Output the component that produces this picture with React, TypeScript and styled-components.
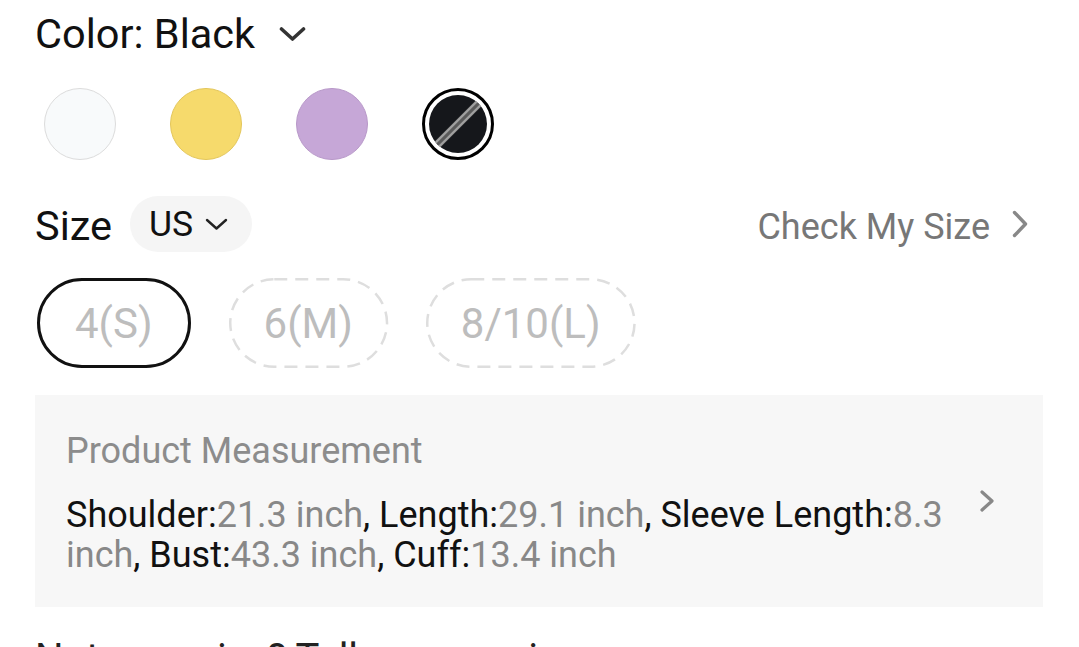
import { FC, Fragment } from "react";
import styled, { createGlobalStyle } from "styled-components";

// ----------------------------------------------------------------------------

const GlobalStyle = createGlobalStyle`
  html, body {
    margin: 0;
    padding: 0;
    background: #ffffff;
    font-family: Roboto, "Noto Sans", "Liberation Sans", sans-serif;
    color: #111111;
    overflow: hidden;
  }
`;

// ----------------------------------------------------------------------------

const Page = styled.div`
  width: 1079px;
  height: 647px;
  box-sizing: border-box;
  padding: 0 36px 0 35px;
  display: flex;
  flex-direction: column;
  overflow: hidden;
`;

const TitleRow = styled.div`
  margin-top: 10px;
  display: flex;
  align-items: center;
  gap: 24px;
  height: 48px;
`;

const Title = styled.span`
  font-size: 41.5px;
  line-height: 48px;
  color: #111;
`;

const SwatchRow = styled.div`
  margin-top: 30px;
  display: flex;
  gap: 54px;
  padding-left: 9px;
`;

const SwatchCircle = styled.div<{ $fill: string; $ring: string }>`
  width: 72px;
  height: 72px;
  box-sizing: border-box;
  border-radius: 50%;
  background: ${({ $fill }) => $fill};
  border: 1.5px solid ${({ $ring }) => $ring};
`;

const SelectedSwatch = styled.div`
  width: 72px;
  height: 72px;
  box-sizing: border-box;
  border-radius: 50%;
  border: 3.5px solid #000;
  padding: 4px;
  background: #fff;
  display: flex;
`;

const SelectedInner = styled.div`
  flex: 1;
  border-radius: 50%;
  background: #15171b;
  overflow: hidden;
  display: flex;

  svg {
    width: 100%;
    height: 100%;
  }
`;

const SizeRow = styled.div`
  margin-top: 36px;
  height: 56px;
  display: flex;
  align-items: center;
`;

const SizeLabel = styled.span`
  font-size: 41.5px;
  line-height: 56px;
  padding-top: 3px;
  color: #111;
`;

const UnitPill = styled.div`
  margin-left: 18px;
  height: 56px;
  box-sizing: border-box;
  padding: 0 24px 0 19px;
  border-radius: 28px;
  background: #f5f5f5;
  display: flex;
  align-items: center;
  gap: 12px;
  font-size: 35.5px;
  color: #111;
`;

const CheckLink = styled.div`
  margin-left: auto;
  margin-right: 15px;
  padding-top: 6px;
  display: flex;
  align-items: center;
  gap: 22px;
  font-size: 36px;
  color: #777;

  svg {
    margin-top: -6px;
  }
`;

const ChipRow = styled.div`
  margin-top: 26px;
  margin-left: 2px;
  display: flex;
  gap: 38px;
`;

const Chip = styled.div<{ $selected?: boolean }>`
  position: relative;
  height: 90px;
  box-sizing: border-box;
  padding: 0 35px;
  border-radius: 45px;
  border: ${({ $selected }) => ($selected ? "3px solid #111" : "none")};
  display: flex;
  align-items: center;
  font-size: 42px;
  color: #bdbdbd;

  svg {
    position: absolute;
    inset: 0;
    width: 100%;
    height: 100%;
    overflow: visible;
  }

  rect {
    x: 1.25px;
    y: 1.25px;
    width: calc(100% - 2.5px);
    height: calc(100% - 2.5px);
  }
`;

const MeasureBox = styled.div`
  margin-top: 27px;
  background: #f7f7f7;
  padding: 36px 46px 32px 31px;
  display: flex;
  align-items: flex-start;
  gap: 18px;
`;

const MeasureBody = styled.div`
  flex: 1;
  display: flex;
  flex-direction: column;
  gap: 24px;
`;

const MeasureTitle = styled.div`
  font-size: 36px;
  line-height: 40px;
  color: #8c8c8c;
`;

const MeasureText = styled.div`
  font-size: 36px;
  line-height: 40px;
  color: #111;
`;

const MeasureValue = styled.span`
  color: #888;
`;

const MeasureArrow = styled.div`
  margin-top: 58px;
  display: flex;
`;

const FootText = styled.div`
  margin-top: 28px;
  font-size: 40px;
  line-height: 48px;
  color: #222;
  white-space: nowrap;
`;

// ----------------------------------------------------------------------------

const swatches = [
  { name: "White", fill: "#f8fafb", ring: "#dcdcdc" },
  { name: "Yellow", fill: "#f6da6c", ring: "#e3c65a" },
  { name: "Purple", fill: "#c6a7d7", ring: "#b898c9" },
];

const sizes = [
  { label: "4(S)", selected: true },
  { label: "6(M)" },
  { label: "8/10(L)" },
];

const measures = [
  { k: "Shoulder:", v: "21.3 inch" },
  { k: "Length:", v: "29.1 inch" },
  { k: "Sleeve Length:", v: "8.3 inch" },
  { k: "Bust:", v: "43.3 inch" },
  { k: "Cuff:", v: "13.4 inch" },
];

const App: FC = () => {
  return (
    <>
      <GlobalStyle />
      <Page>
        <TitleRow>
          <Title>Color: Black</Title>
          <svg width="27" height="16" viewBox="0 0 27 16">
            <polyline
              points="2.5,3 13.5,13 24.5,3"
              fill="none"
              stroke="#333"
              strokeWidth="3.6"
              strokeLinecap="round"
              strokeLinejoin="round"
            />
          </svg>
        </TitleRow>

        <SwatchRow>
          {swatches.map((s) => (
            <SwatchCircle key={s.name} $fill={s.fill} $ring={s.ring} />
          ))}
          <SelectedSwatch>
            <SelectedInner>
              <svg viewBox="0 0 56 56">
                <line x1="4" y1="52" x2="52" y2="4" stroke="#5a5a5a" strokeWidth="8" />
                <line x1="5.8" y1="53.8" x2="53.8" y2="5.8" stroke="#a0a0a0" strokeWidth="2.2" />
                <line x1="2.2" y1="50.2" x2="50.2" y2="2.2" stroke="#a0a0a0" strokeWidth="2.2" />
              </svg>
            </SelectedInner>
          </SelectedSwatch>
        </SwatchRow>

        <SizeRow>
          <SizeLabel>Size</SizeLabel>
          <UnitPill>
            <span>US</span>
            <svg width="23" height="14" viewBox="0 0 23 14">
              <polyline
                points="2,3 11.5,11.5 21,3"
                fill="none"
                stroke="#222"
                strokeWidth="2.4"
                strokeLinecap="round"
                strokeLinejoin="round"
              />
            </svg>
          </UnitPill>
          <CheckLink>
            <span>Check My Size</span>
            <svg width="16" height="28" viewBox="0 0 16 28">
              <polyline
                points="2.5,2.5 13.5,14 2.5,25.5"
                fill="none"
                stroke="#888"
                strokeWidth="3.4"
                strokeLinecap="round"
                strokeLinejoin="round"
              />
            </svg>
          </CheckLink>
        </SizeRow>

        <ChipRow>
          {sizes.map((s) => (
            <Chip key={s.label} $selected={s.selected}>
              {!s.selected && (
                <svg>
                  <rect
                    rx="44"
                    ry="44"
                    fill="none"
                    stroke="#dedede"
                    strokeWidth="2.5"
                    strokeDasharray="13 8"
                  />
                </svg>
              )}
              {s.label}
            </Chip>
          ))}
        </ChipRow>

        <MeasureBox>
          <MeasureBody>
            <MeasureTitle>Product Measurement</MeasureTitle>
            <MeasureText>
              {measures.map((m, i) => (
                <Fragment key={m.k}>
                  {m.k}
                  <MeasureValue>{m.v}</MeasureValue>
                  {i < measures.length - 1 ? ", " : ""}
                </Fragment>
              ))}
            </MeasureText>
          </MeasureBody>
          <MeasureArrow>
            <svg width="19" height="24" viewBox="0 0 19 24">
              <polyline
                points="4,3 14,12 4,21"
                fill="none"
                stroke="#888"
                strokeWidth="3.2"
                strokeLinecap="round"
                strokeLinejoin="round"
              />
            </svg>
          </MeasureArrow>
        </MeasureBox>

        <FootText>Not your size? Tell us your size</FootText>
      </Page>
    </>
  );
};

export default App;
